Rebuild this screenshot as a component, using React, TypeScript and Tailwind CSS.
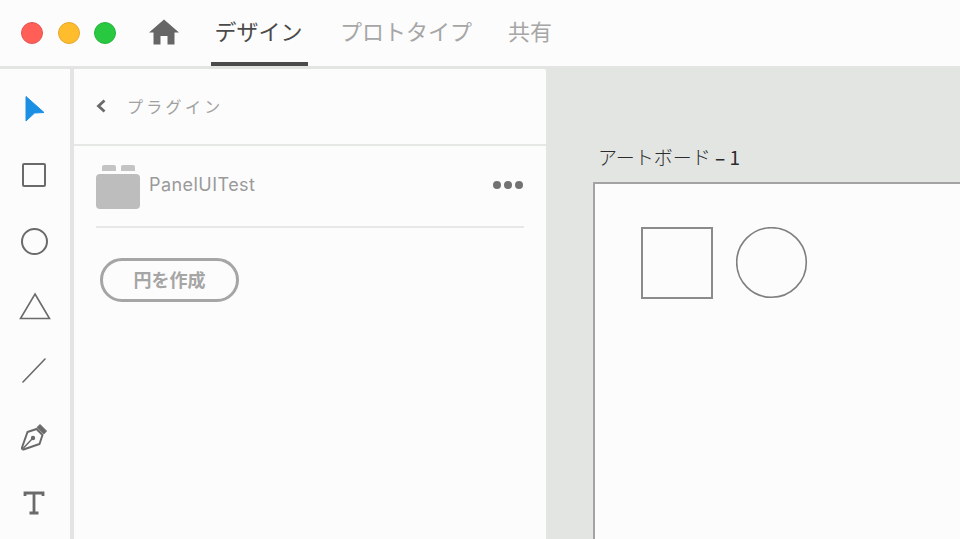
const jp = "font-['Noto_Sans_CJK_JP','Noto_Sans',sans-serif]";

function ToolIcon({ children }: { children: React.ReactNode }) {
  return <div className="flex h-[65.7px] w-full items-center justify-center pr-[2px]">{children}</div>;
}

function Toolbar() {
  return (
    <div className="flex w-[70px] shrink-0 flex-col items-center pt-[8px]">
      <ToolIcon>
        <svg width="22" height="27" viewBox="0 0 22 27" className="-mt-[2px] ml-[2px]">
          <path d="M2 1.5 L20 17.5 L10.5 18 L2 26 Z" fill="#1b8fe4" stroke="#1b8fe4" strokeWidth="1" strokeLinejoin="round" />
        </svg>
      </ToolIcon>
      <ToolIcon>
        <div className="-mt-[1px] h-[24px] w-[24px] rounded-[2px] border-2 border-[#6a6a6a]" />
      </ToolIcon>
      <ToolIcon>
        <div className="h-[27px] w-[27px] rounded-full border-2 border-[#6a6a6a]" />
      </ToolIcon>
      <ToolIcon>
        <svg width="32" height="28" viewBox="0 0 32 28" className="-mt-[2px] ml-[1px]">
          <path d="M16 2 L30.5 26.5 L1.5 26.5 Z" fill="none" stroke="#6a6a6a" strokeWidth="1.6" />
        </svg>
      </ToolIcon>
      <ToolIcon>
        <svg width="26" height="26" viewBox="0 0 26 26" className="-mt-[5px]">
          <path d="M2 25 L24 2" fill="none" stroke="#6a6a6a" strokeWidth="1.6" strokeLinecap="round" />
        </svg>
      </ToolIcon>
      <ToolIcon>
        <svg width="28" height="28" viewBox="0 0 28 28" className="-mt-[2px]">
          <path d="M20 1.5 L26.5 8 L23.8 11 L17 4.5 Z" fill="#6a6a6a" stroke="#6a6a6a" strokeLinejoin="round" />
          <path d="M16.5 6 L22.5 12 L19.5 21 L3.5 26.5 Q1.5 26.5 2 24.5 L7.5 9 Z" fill="none" stroke="#6a6a6a" strokeWidth="2" strokeLinejoin="round" />
          <path d="M3 25.5 L12.5 15.5" stroke="#6a6a6a" strokeWidth="1.5" />
          <circle cx="13" cy="15" r="2.2" fill="#6a6a6a" />
        </svg>
      </ToolIcon>
      <ToolIcon>
        <svg width="22" height="24" viewBox="0 0 22 24" className="-mt-[1px]">
          <path d="M2 5 V2 H20 V5 M11 2 V22 M6.5 22 H15.5" fill="none" stroke="#6a6a6a" strokeWidth="2.8" />
        </svg>
      </ToolIcon>
    </div>
  );
}

function PluginPanel() {
  return (
    <div className="flex w-[472px] shrink-0 flex-col rounded-tr-[2px] bg-[#fcfcfc]">
      <div className="flex h-[77px] items-center border-b-2 border-[#e6e8e5] pb-[2px] pl-[21px]">
        <svg width="12" height="16" viewBox="0 0 12 16">
          <path d="M9.5 2.5 L3.5 8 L9.5 13.5" fill="none" stroke="#6a6a6a" strokeWidth="2.8" />
        </svg>
        <span className={`${jp} ml-[20px] text-[16px] tracking-[3.3px] text-[#a0a0a0]`}>プラグイン</span>
      </div>
      <div className="mx-[22px] flex h-[82px] items-center border-b-2 border-[#e6e8e5] pt-[2px]">
        <div className="-mt-[1px] flex w-[44px] flex-col items-center">
          <div className="flex gap-[5px]">
            <div className="h-[6px] w-[14px] rounded-t-[2px] bg-[#c4c4c4]" />
            <div className="h-[6px] w-[14px] rounded-t-[2px] bg-[#c4c4c4]" />
          </div>
          <div className="mt-[3px] h-[35px] w-[44px] rounded-[4px] bg-[#bdbdbd]" />
        </div>
        <span className="-mt-[5px] ml-[9px] font-['Inter',sans-serif] text-[18px] tracking-[0.45px] text-[#9a9a9a]">PanelUITest</span>
        <div className="-mt-[4px] ml-auto mr-[1px] flex gap-[3px]">
          <div className="h-[8px] w-[8px] rounded-full bg-[#727272]" />
          <div className="h-[8px] w-[8px] rounded-full bg-[#727272]" />
          <div className="h-[8px] w-[8px] rounded-full bg-[#727272]" />
        </div>
      </div>
      <div className="pl-[26px] pt-[30px]">
        <div className={`${jp} flex h-[44px] w-[139px] items-center justify-center rounded-full border-[3px] border-[#a5a5a5] pb-[1px] text-[18px] font-bold text-[#a5a5a5]`}>
          円を作成
        </div>
      </div>
    </div>
  );
}

function Canvas() {
  return (
    <div className="min-w-0 flex-1 overflow-hidden pl-[47px] pt-[75px]">
      <div className={`${jp} h-[38px] pl-[5px] text-[19px] font-light leading-[26px] text-[#2c2c2c]`}>アートボード <span className="font-medium">–</span> <span className="font-normal">1</span></div>
      <div className="flex h-[400px] w-[400px] items-start gap-[22.5px] border-2 border-[#a3a3a3] bg-[#fcfcfc] pl-[46px] pt-[43px]">
        <div className="h-[72px] w-[72px] border-2 border-[#8b8b8b]" />
        <svg width="72" height="72" viewBox="0 0 72 72">
          <circle cx="35.5" cy="35.5" r="34.8" fill="none" stroke="#7f7f7f" strokeWidth="1.6" />
        </svg>
      </div>
    </div>
  );
}

export default function App() {
  return (
    <div className="flex h-[539px] w-[960px] flex-col overflow-hidden bg-[#fcfcfc]">
      <header className="flex h-[69px] shrink-0 items-stretch border-b-[3px] border-[#e3e5e2] bg-[#fcfcfc]">
        <div className="flex items-center gap-[14.5px] pb-[1px] pl-[21px]">
          <div className="h-[22px] w-[22px] rounded-full border border-[#e5534f] bg-[#ff5f57]" />
          <div className="h-[22px] w-[22px] rounded-full border border-[#e6a72a] bg-[#ffbd2e]" />
          <div className="h-[22px] w-[22px] rounded-full border border-[#26b53c] bg-[#28c840]" />
        </div>
        <div className="ml-[32px] flex items-center pb-[2px]">
          <svg width="32" height="26" viewBox="0 0 32 26">
            <path d="M16 0.5 L31 13.5 L26.5 13.5 V25.5 H19.5 V17 H12.5 V25.5 H5.5 V13.5 L1 13.5 Z" fill="#666666" />
          </svg>
        </div>
        <nav className={`${jp} ml-[31px] flex items-stretch text-[22px]`}>
          <div className="flex w-[97px] items-center justify-center border-b-[4px] border-[#4b4b4b] pb-[2px] pr-[2px] text-[#4a4a4a]">デザイン</div>
          <div className="ml-[32px] flex items-center pb-[6px] text-[#a6a6a6]">プロトタイプ</div>
          <div className="ml-[36px] flex items-center pb-[6px] text-[#a6a6a6]">共有</div>
        </nav>
      </header>
      <div className="flex min-h-0 flex-1 bg-[#e3e5e2]">
        <div className="flex min-h-0 shrink-0 gap-[4px]">
          <div className="bg-[#fcfcfc]"><Toolbar /></div>
          <PluginPanel />
        </div>
        <Canvas />
      </div>
    </div>
  );
}
